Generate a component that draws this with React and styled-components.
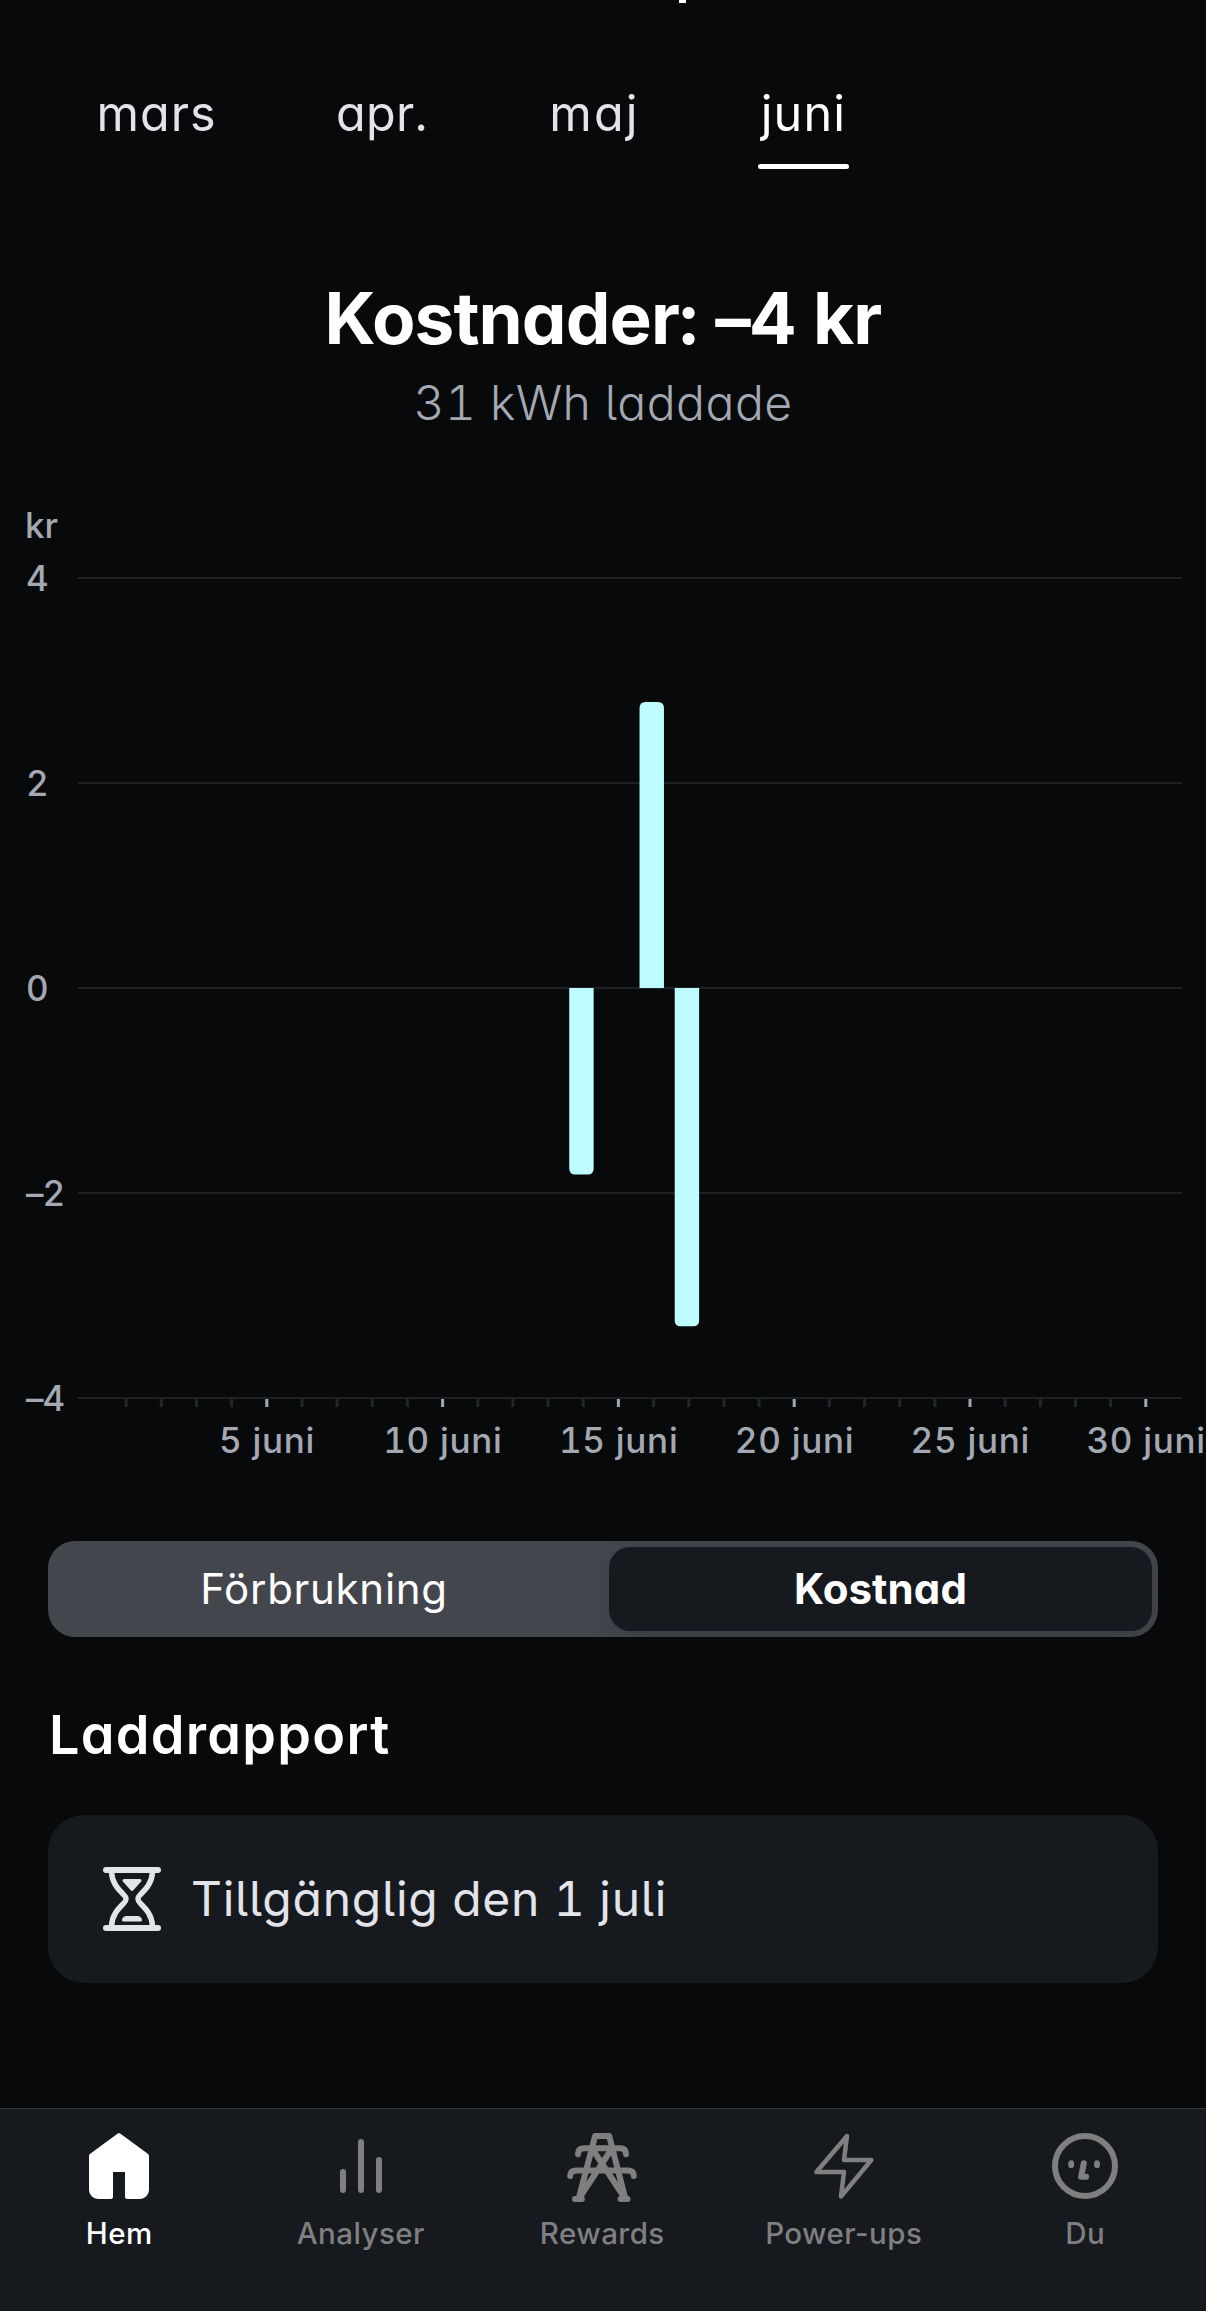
import React, { useState } from "react";
import styled, { createGlobalStyle } from "styled-components";

const GlobalStyle = createGlobalStyle`
  * {
    box-sizing: border-box;
  }
  body {
    margin: 0;
    background: #08090b;
  }
`;

const Screen = styled.div`
  display: flex;
  flex-direction: column;
  width: 1206px;
  height: 2311px;
  overflow: hidden;
  background: #08090b;
  color: #ffffff;
  font-family: Inter, "Liberation Sans", sans-serif;
  font-feature-settings: "cv11", "cv05", "tnum";
  white-space: nowrap;
`;

// bottom edge of the title that is scrolled out of view
const ScrolledTitle = styled.div`
  width: 7px;
  height: 3px;
  margin-left: 679px;
  background: #ffffff;
`;

const Months = styled.div`
  display: flex;
  gap: 116px;
  padding: 83px 0 0 96px;
`;

const Month = styled.button`
  width: ${(props) => props.$width}px;
  height: 84px;
  padding: 0 0 22px;
  border: 0;
  background: none;
  color: ${(props) => (props.$active ? "#ffffff" : "#e2e4ea")};
  font: inherit;
  font-feature-settings: inherit;
  font-size: 48.5px;
  line-height: 56px;
  letter-spacing: ${(props) => props.$spacing}px;
  text-align: center;

  &::after {
    content: "";
    display: block;
    height: 5px;
    margin-top: 22px;
    border-radius: 3px;
    background: ${(props) => (props.$active ? "#ffffff" : "transparent")};
  }
`;

const Summary = styled.header`
  display: flex;
  flex-direction: column;
  align-items: center;
  margin-top: 106px;
`;

const Cost = styled.h1`
  margin: 0;
  font-size: 71px;
  font-weight: 700;
  line-height: 84px;
  letter-spacing: -0.9px;
`;

const Charged = styled.p`
  margin: 13px 0 0;
  color: #a3a8b2;
  font-size: 48px;
  font-weight: 350;
  line-height: 60px;
  letter-spacing: 0.5px;
`;

const ChartSvg = styled.svg`
  display: block;
  flex: none;
  margin-top: 57px;
`;

const AxisText = styled.text`
  fill: #a3a8b2;
  font-size: 35px;
  font-weight: 500;
  letter-spacing: ${(props) => props.$spacing || 0}px;
`;

const Segments = styled.div`
  display: flex;
  flex: none;
  justify-content: space-between;
  width: 1110px;
  height: 96px;
  margin: 51px 0 0 48px;
  padding: 6px;
  border-radius: 27px;
  background: #44464e;
  overflow: hidden;
`;

const Segment = styled.button`
  width: ${(props) => (props.$active ? 543 : 540)}px;
  padding: 0;
  border: 0;
  border-radius: 21px;
  background: ${(props) => (props.$active ? "#16191e" : "transparent")};
  box-shadow: ${(props) => (props.$active ? "0 9px 24px rgba(0, 0, 0, 0.12)" : "none")};
  color: #ffffff;
  font: inherit;
  font-feature-settings: inherit;
  font-size: 42px;
  font-weight: ${(props) => (props.$active ? 700 : 380)};
  line-height: 84px;
  letter-spacing: ${(props) => (props.$active ? 0.1 : 0.7)}px;
`;

const SectionTitle = styled.h2`
  margin: 66px 0 0 49px;
  font-size: 54px;
  font-weight: 600;
  line-height: 64px;
  letter-spacing: 1.3px;
`;

const ReportCard = styled.div`
  display: flex;
  flex: none;
  align-items: center;
  gap: 30px;
  width: 1110px;
  height: 168px;
  margin: 48px 0 0 48px;
  padding-left: 55px;
  border-radius: 36px;
  background: #16191e;
  color: #e2e4ea;
  font-size: 48px;
  line-height: 60px;
  letter-spacing: 0.75px;
`;

const TabBar = styled.nav`
  display: grid;
  flex: none;
  grid-template-columns: repeat(5, 241.5px);
  height: 203px;
  margin: auto 0 0;
  border-top: 1px solid #333436;
  background: #16191e;
  font-feature-settings: normal;
`;

const Tab = styled.a`
  display: flex;
  flex-direction: column;
  align-items: center;
  margin-left: -3px;
  padding-top: 21px;
  color: ${(props) => (props.$active ? "#ffffff" : "#7f7f80")};
  font-size: 29.5px;
  font-weight: 500;
  line-height: 36px;
  letter-spacing: 0.45px;

  span {
    margin-top: 13px;
  }
`;

const HourglassIcon = () => (
  <svg width="58" height="64" viewBox="0 0 58 64" fill="none" stroke="currentColor">
    <path d="M3 3h52M3 61h52" strokeWidth="6" strokeLinecap="round" />
    <path
      d="M8.5 5C9 16 15 22 20.5 27.5Q25.5 32 20.5 36.5C15 42 9 48 8.5 59M49.5 5C49 16 43 22 37.5 27.5Q32.5 32 37.5 36.5C43 42 49 48 49.5 59"
      strokeWidth="5.5"
    />
    <path
      d="M21 13.5h16L29 22.5zM20.5 53c.5-2 1.5-2.5 3-2.5h11c1.5 0 2.5.5 3 2.5z"
      fill="currentColor"
      strokeWidth="3"
      strokeLinejoin="round"
    />
  </svg>
);

const TabIcon = ({ children }) => (
  <svg
    width="72"
    height="72"
    viewBox="0 0 24 24"
    fill="none"
    stroke="currentColor"
    strokeWidth="2"
    strokeLinecap="round"
    strokeLinejoin="round"
  >
    {children}
  </svg>
);

const HomeIcon = () => (
  <TabIcon>
    <path
      d="M11.6 1.15a.7.7 0 0 1 .8 0L21.7 8a.8.8 0 0 1 .3.6V20a3 3 0 0 1-3 3h-4.3a.7.7 0 0 1-.7-.7V14h-4v8.3a.7.7 0 0 1-.7.7H5a3 3 0 0 1-3-3V8.6A.8.8 0 0 1 2.3 8z"
      fill="currentColor"
      stroke="none"
    />
  </TabIcon>
);

const BarsIcon = () => (
  <TabIcon>
    <path d="M6 14v6M12 4v16M18 10v10" />
  </TabIcon>
);

const PylonIcon = () => (
  <TabIcon>
    <path d="M4.2 23L9.7 2h4.7l5.4 21M8.9 6.5L19.8 23M15.1 6.5L4.2 23" />
    <path d="M4 8.1C4 6.8 4.7 6.1 6 6.1h12c1.3 0 2 .7 2 2M1.4 15.3c0-1.3.8-1.8 2.1-1.8h17c1.3 0 2.1.5 2.1 1.8M3 23h2.3M18.2 23h2.3" />
  </TabIcon>
);

const BoltIcon = () => (
  <TabIcon>
    <path d="M13 2L2.8 14H12l-1 8.2L21.1 10H12z" strokeWidth="1.5" />
  </TabIcon>
);

const FaceIcon = () => (
  <TabIcon>
    <circle cx="12" cy="12" r="10" />
    <ellipse cx="7.4" cy="11.4" rx="1" ry="1.35" fill="currentColor" stroke="none" />
    <ellipse cx="16" cy="11.4" rx="1" ry="1.35" fill="currentColor" stroke="none" />
    <path d="M11.6 11.1l-.9 4.5h1.7" />
  </TabIcon>
);

const months = [
  { name: "mars", width: 121, spacing: 1 },
  { name: "apr.", width: 98, spacing: 0.3 },
  { name: "maj", width: 95, spacing: 2.2 },
  { name: "juni", width: 91, spacing: 1.2 },
];

const costs = [
  { day: 14, value: -1.82 },
  { day: 16, value: 2.79 },
  { day: 17, value: -3.3 },
];

const tabs = [
  { label: "Hem", Icon: HomeIcon },
  { label: "Analyser", Icon: BarsIcon },
  { label: "Rewards", Icon: PylonIcon },
  { label: "Power-ups", Icon: BoltIcon },
  { label: "Du", Icon: FaceIcon },
];

const dayX = (day) => 91 + day * 35.16;
const valueY = (value) => 498 - value * 102.5;

const barPath = ({ day, value }) => {
  const x = dayX(day) - 14;
  const end = valueY(value);
  const r = value > 0 ? 6 : -6;
  return `M${x} ${valueY(0)}V${end + r}q0 ${-r} 6 ${-r}h12.4q6 0 6 ${r}V${valueY(0)}z`;
};

const Chart = () => (
  <ChartSvg width="1206" height="1000" viewBox="0 0 1206 1000">
    <AxisText x="25" y="48">
      kr
    </AxisText>
    {[4, 2, 0, -2, -4].map((value) => (
      <g key={value}>
        <rect x="78" y={valueY(value) - 1} width="1104" height="2" fill="#1e2124" />
        <AxisText x="26" y={valueY(value) + 12.5} $spacing={-1}>
          {value < 0 ? `–${-value}` : value}
        </AxisText>
      </g>
    ))}
    {Array.from({ length: 30 }, (_, i) => i + 1).map((day) => (
      <g key={day}>
        <rect x={dayX(day) - 1.5} y="909" width="3" height="8" fill={day % 5 ? "#22272a" : "#a3a8b2"} />
        {day % 5 === 0 && (
          <AxisText x={dayX(day) + 0.3} y="963" textAnchor="middle" $spacing={0.7}>
            {day} juni
          </AxisText>
        )}
      </g>
    ))}
    {costs.map((cost) => (
      <path key={cost.day} d={barPath(cost)} fill="#bffcff" />
    ))}
  </ChartSvg>
);

const App = () => {
  const [month, setMonth] = useState("juni");
  const [view, setView] = useState("Kostnad");

  return (
    <Screen>
      <GlobalStyle />
      <ScrolledTitle />
      <Months>
        {months.map(({ name, width, spacing }) => (
          <Month key={name} $width={width} $spacing={spacing} $active={name === month} onClick={() => setMonth(name)}>
            {name}
          </Month>
        ))}
      </Months>
      <Summary>
        <Cost>Kostnader: –4 kr</Cost>
        <Charged>31 kWh laddade</Charged>
      </Summary>
      <Chart />
      <Segments>
        {["Förbrukning", "Kostnad"].map((name) => (
          <Segment key={name} $active={name === view} onClick={() => setView(name)}>
            {name}
          </Segment>
        ))}
      </Segments>
      <SectionTitle>Laddrapport</SectionTitle>
      <ReportCard>
        <HourglassIcon />
        Tillgänglig den 1 juli
      </ReportCard>
      <TabBar>
        {tabs.map(({ label, Icon }) => (
          <Tab key={label} $active={label === "Hem"}>
            <Icon />
            <span>{label}</span>
          </Tab>
        ))}
      </TabBar>
    </Screen>
  );
};

export default App;
